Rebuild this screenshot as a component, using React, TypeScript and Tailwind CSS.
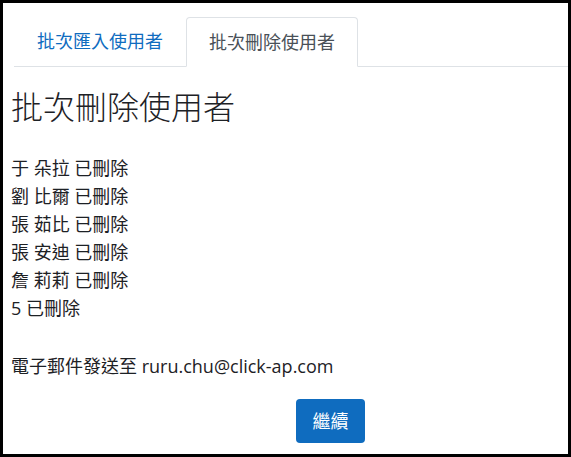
export default function App() {
  const f = { fontFamily: '"Segoe UI","Open Sans","Noto Sans CJK TC",sans-serif' };
  const rows = ["于 朵拉 已刪除", "劉 比爾 已刪除", "張 茹比 已刪除", "張 安迪 已刪除", "詹 莉莉 已刪除", "5 已刪除"];
  return (
    <div style={f} className="w-[571px] h-[457px] border-[3px] border-black bg-white text-[#1d2125] overflow-hidden box-border">
      <div className="flex pt-[14px] border-b border-[#dee2e6] ml-[11px]">
        <div className="px-[23px] h-[49px] flex items-center text-[18px] text-[#0f6cbf]">批次匯入使用者</div>
        <div className="px-[22px] h-[50px] -mb-px flex items-center text-[18px] text-[#495057] border border-[#dee2e6] border-b-white rounded-t-[4px] bg-white">批次刪除使用者</div>
      </div>
      <div className="px-[8px]">
        <h2 className="text-[32px] font-light mt-[22px] leading-[36px]">批次刪除使用者</h2>
        <div className="mt-[29px] text-[18px] leading-[28px]">
          {rows.map((r) => <div key={r}>{r}</div>)}
        </div>
        <div className="mt-[30px] text-[18px] leading-[28px]">電子郵件發送至 ruru.chu@click-ap.com</div>
        <div className="flex mt-[19px] pl-[285px]">
          <button className="w-[69px] h-[44px] bg-[#0f6cbf] text-white text-[18px] rounded-[4px]">繼續</button>
        </div>
      </div>
    </div>
  );
}
